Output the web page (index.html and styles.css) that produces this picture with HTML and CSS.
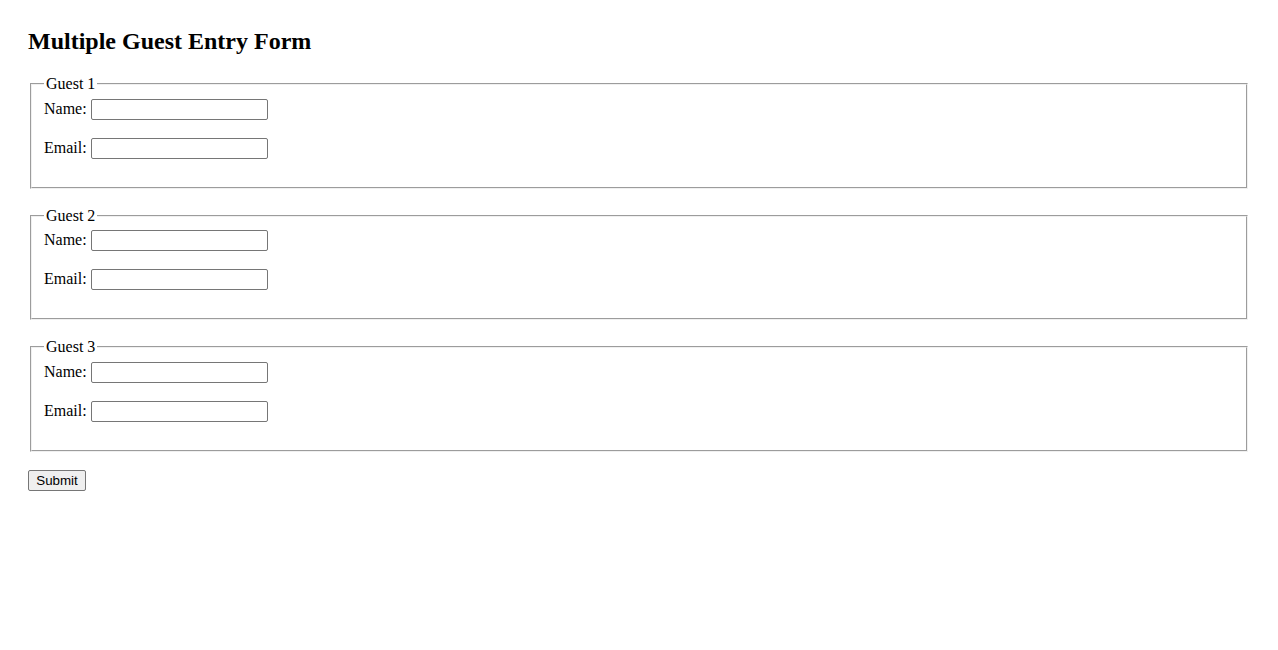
FILE: index.html
```html
<!DOCTYPE html>
<html lang="en">
<head>
<meta charset="utf-8">
<title>Multiple Guest Entry Form</title>
<link rel="stylesheet" href="styles.css">
</head>
<body>
<div class="page">
  <h2 class="title">Multiple Guest Entry Form</h2>
  <form class="guest-form">
    <fieldset class="guest">
      <legend>Guest 1</legend>
      <div class="row"><label for="n1">Name:</label> <input class="field" type="text" id="n1"></div>
      <div class="row"><label for="e1">Email:</label> <input class="field" type="email" id="e1"></div>
    </fieldset>
    <fieldset class="guest">
      <legend>Guest 2</legend>
      <div class="row"><label for="n2">Name:</label> <input class="field" type="text" id="n2"></div>
      <div class="row"><label for="e2">Email:</label> <input class="field" type="email" id="e2"></div>
    </fieldset>
    <fieldset class="guest">
      <legend>Guest 3</legend>
      <div class="row"><label for="n3">Name:</label> <input class="field" type="text" id="n3"></div>
      <div class="row"><label for="e3">Email:</label> <input class="field" type="email" id="e3"></div>
    </fieldset>
    <button type="submit" class="submit">Submit</button>
  </form>
</div>
</body>
</html>
```

FILE: styles.css
```css
body {
  margin: 8px;
  font-family: "Liberation Serif", "Times New Roman", serif;
  font-size: 16px;
  color: #000;
  background: #fff;
}
.page {
  padding: 20px;
}
.title {
  font-size: 24px;
  font-weight: bold;
  margin: 0 0 19.92px;
}
.guest {
  margin: 0 2px 18px;
  border: 2px groove #f0f0f0;
  padding: 5.6px 12px 10px;
}
.guest legend {
  padding: 0 2px;
}
.row {
  height: 21px;
  margin-bottom: 18px;
}
.field {
  box-sizing: border-box;
  width: 177px;
  height: 21px;
  border: 1px solid #767676;
  border-radius: 2px;
  font-family: "Liberation Sans", Arial, sans-serif;
  font-size: 13.33px;
  padding: 1px 2px;
  vertical-align: baseline;
}
.submit {
  font-family: "Liberation Sans", Arial, sans-serif;
  font-size: 13.33px;
  padding: 1px 6px;
  min-width: 58px;
  border: 1px solid #767676;
  border-radius: 2px;
  background: #efefef;
  height: 21px;
}
```
